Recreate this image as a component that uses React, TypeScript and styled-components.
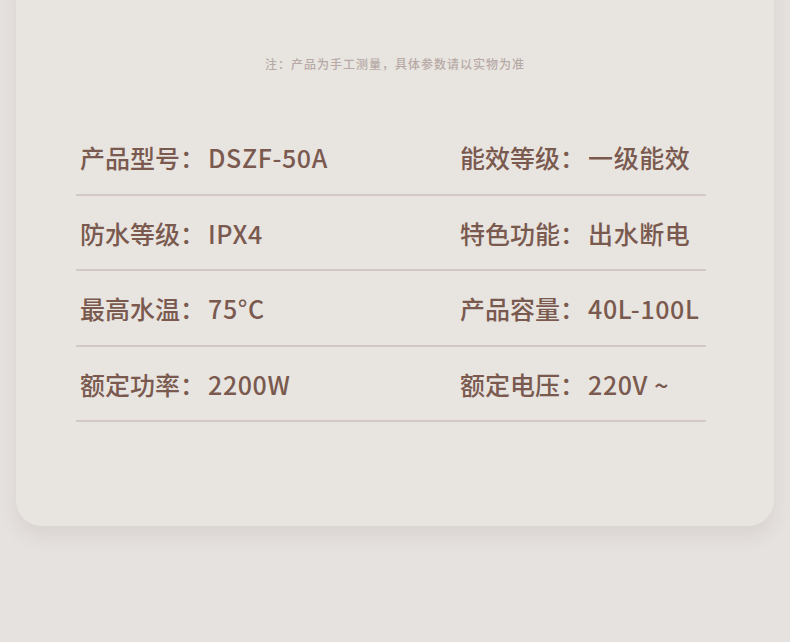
import styled, { createGlobalStyle } from 'styled-components';

const GlobalStyle = createGlobalStyle`
  html, body {
    margin: 0;
    padding: 0;
    background: #e6e2e0;
  }
  body {
    font-family: "Noto Sans CJK SC", "Noto Sans", sans-serif;
  }
`;

interface Spec {
  label: string;
  value: string;
}

const rows: [Spec, Spec][] = [
  [
    { label: '产品型号', value: 'DSZF-50A' },
    { label: '能效等级', value: '一级能效' },
  ],
  [
    { label: '防水等级', value: 'IPX4' },
    { label: '特色功能', value: '出水断电' },
  ],
  [
    { label: '最高水温', value: '75°C' },
    { label: '产品容量', value: '40L-100L' },
  ],
  [
    { label: '额定功率', value: '2200W' },
    { label: '额定电压', value: '220V ~' },
  ],
];

export default function App() {
  return (
    <Page>
      <GlobalStyle />
      <Card>
        <Note>注：产品为手工测量，具体参数请以实物为准</Note>
        <SpecTable>
          {rows.map((row, i) => (
            <SpecRow key={i}>
              {row.map((spec) => (
                <SpecCell key={spec.label}>
                  {spec.label}：<Value>{spec.value}</Value>
                </SpecCell>
              ))}
            </SpecRow>
          ))}
        </SpecTable>
      </Card>
    </Page>
  );
}

const Page = styled.div`
  width: 790px;
  height: 642px;
  overflow: hidden;
  background: #e6e2e0;
`;

const Card = styled.div`
  margin: -40px 16px 0;
  height: 566px;
  box-sizing: border-box;
  background: #e8e4e0;
  border-radius: 26px;
  box-shadow: 0 10px 18px rgba(120, 105, 100, 0.12);
  padding: 96px 68px 0 60px;
  display: flex;
  flex-direction: column;
  align-items: center;
`;

const Note = styled.div`
  font-size: 12px;
  line-height: 16px;
  letter-spacing: 1px;
  font-weight: 500;
  color: #b7aaa6;
  margin-left: 8px;
`;

const SpecTable = styled.div`
  width: 100%;
  margin-top: 48px;
  display: flex;
  flex-direction: column;
`;

const SpecRow = styled.div`
  display: grid;
  grid-template-columns: 380px 1fr;
  height: 75.5px;
  box-sizing: border-box;
  padding: 20px 0 0 4px;
  border-bottom: 2px solid #d2c9c5;
`;

const SpecCell = styled.div`
  font-size: 25px;
  line-height: 34px;
  font-weight: 500;
  color: #7a5a4f;
  white-space: nowrap;
`;

const Value = styled.span`
  margin-left: 3px;
  letter-spacing: 0.6px;
`;
